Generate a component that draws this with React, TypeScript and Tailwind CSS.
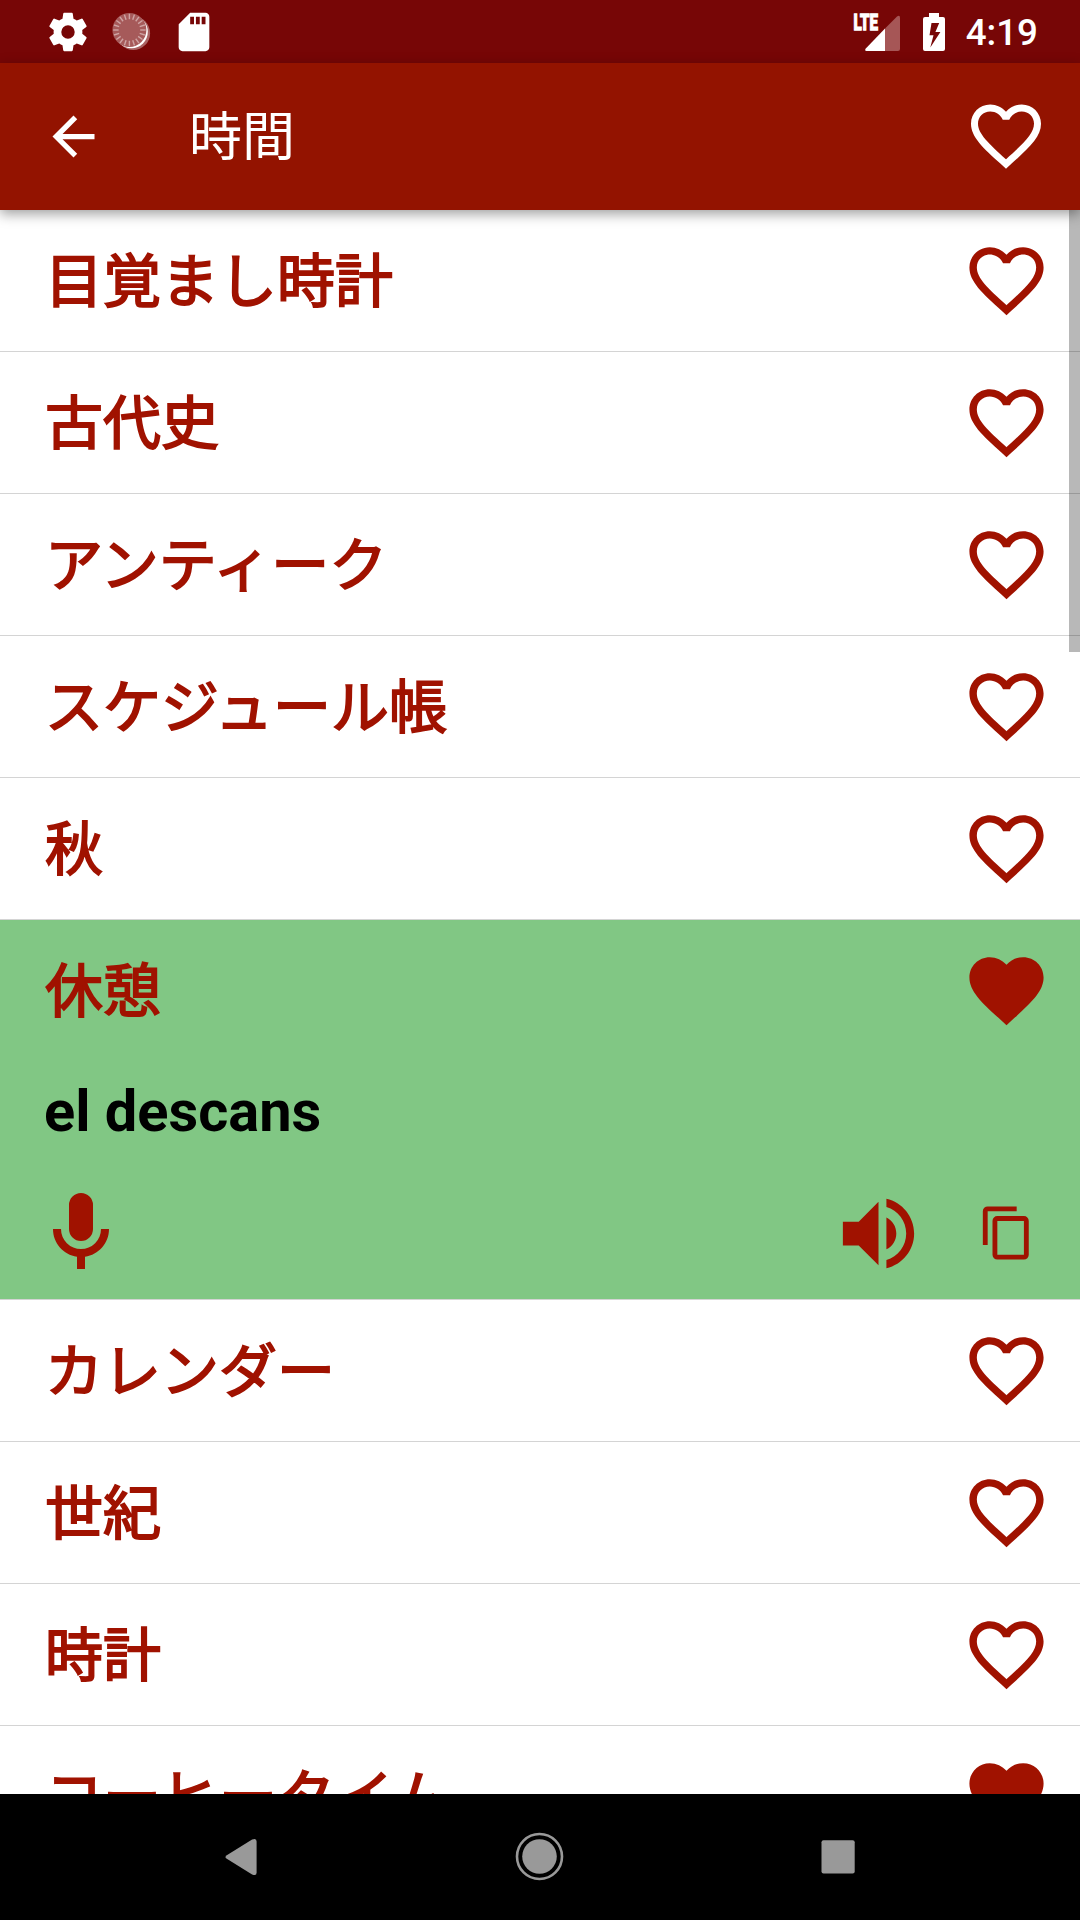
import { useState } from 'react';

// ─── Types ───────────────────────────────────────────────────────────────────

interface Word {
  term: string;
  translation?: string;
  favorite?: boolean;
}

// ─── Data ────────────────────────────────────────────────────────────────────

const WORDS: Word[] = [
  { term: '目覚まし時計' },
  { term: '古代史' },
  { term: 'アンティーク' },
  { term: 'スケジュール帳' },
  { term: '秋' },
  { term: '休憩', translation: 'el descans', favorite: true },
  { term: 'カレンダー' },
  { term: '世紀' },
  { term: '時計' },
  { term: 'コーヒータイム', favorite: true },
];

const ICONS = {
  back: 'M20 11H7.83l5.59-5.59L12 4l-8 8 8 8 1.41-1.41L7.83 13H20v-2z',
  heart:
    'M12,21.35L10.55,20.03C5.4,15.36 2,12.27 2,8.5C2,5.41 4.42,3 7.5,3C9.24,3 10.91,3.81 12,5.08C13.09,3.81 14.76,3 16.5,3C19.58,3 22,5.41 22,8.5C22,12.27 18.6,15.36 13.45,20.03L12,21.35Z',
  heartOutline:
    'M12.1,18.55L12,18.65L11.89,18.55C7.14,14.24 4,11.39 4,8.5C4,6.5 5.5,5 7.5,5C9.04,5 10.54,6 11.07,7.36H12.93C13.46,6 14.96,5 16.5,5C18.5,5 20,6.5 20,8.5C20,11.39 16.86,14.24 12.1,18.55M16.5,3C14.76,3 13.09,3.81 12,5.08C10.91,3.81 9.24,3 7.5,3C4.42,3 2,5.41 2,8.5C2,12.27 5.4,15.36 10.55,20.03L12,21.35L13.45,20.03C18.6,15.36 22,12.27 22,8.5C22,5.41 19.58,3 16.5,3Z',
  mic: 'M12,2A3,3 0 0,1 15,5V11A3,3 0 0,1 12,14A3,3 0 0,1 9,11V5A3,3 0 0,1 12,2M19,11C19,14.53 16.39,17.44 13,17.93V21H11V17.93C7.61,17.44 5,14.53 5,11H7A5,5 0 0,0 12,16A5,5 0 0,0 17,11H19Z',
  volume:
    'M14,3.23V5.29C16.89,6.15 19,8.83 19,12C19,15.17 16.89,17.84 14,18.7V20.77C18,19.86 21,16.28 21,12C21,7.72 18,4.14 14,3.23M16.5,12C16.5,10.23 15.5,8.71 14,7.97V16C15.5,15.29 16.5,13.76 16.5,12M3,9V15H7L12,20V4L7,9H3Z',
  copy: 'M19,21H8V7H19M19,5H8A2,2 0 0,0 6,7V21A2,2 0 0,0 8,23H19A2,2 0 0,0 21,21V7A2,2 0 0,0 19,5M16,1H4A2,2 0 0,0 2,3V17H4V3H16V1Z',
  cog: 'M12,15.5A3.5,3.5 0 0,1 8.5,12A3.5,3.5 0 0,1 12,8.5A3.5,3.5 0 0,1 15.5,12A3.5,3.5 0 0,1 12,15.5M19.43,12.97C19.47,12.65 19.5,12.33 19.5,12C19.5,11.67 19.47,11.34 19.43,11L21.54,9.37C21.73,9.22 21.78,8.95 21.66,8.73L19.66,5.27C19.54,5.05 19.27,4.96 19.05,5.05L16.56,6.05C16.04,5.66 15.5,5.32 14.87,5.07L14.5,2.42C14.46,2.18 14.25,2 14,2H10C9.75,2 9.54,2.18 9.5,2.42L9.13,5.07C8.5,5.32 7.96,5.66 7.44,6.05L4.95,5.05C4.73,4.96 4.46,5.05 4.34,5.27L2.34,8.73C2.21,8.95 2.27,9.22 2.46,9.37L4.57,11C4.53,11.34 4.5,11.67 4.5,12C4.5,12.33 4.53,12.65 4.57,12.97L2.46,14.63C2.27,14.78 2.21,15.05 2.34,15.27L4.34,18.73C4.46,18.95 4.73,19.03 4.95,18.95L7.44,17.94C7.96,18.34 8.5,18.68 9.13,18.93L9.5,21.58C9.54,21.82 9.75,22 10,22H14C14.25,22 14.46,21.82 14.5,21.58L14.87,18.93C15.5,18.67 16.04,18.34 16.56,17.94L19.05,18.95C19.27,19.03 19.54,18.95 19.66,18.73L21.66,15.27C21.78,15.05 21.73,14.78 21.54,14.63L19.43,12.97Z',
  sdCard:
    'M18 2h-8L4.02 8 4 20c0 1.1.9 2 2 2h12c1.1 0 2-.9 2-2V4c0-1.1-.9-2-2-2zm-6 6h-2V4h2v4zm3 0h-2V4h2v4zm3 0h-2V4h2v4z',
};

function Icon({ name, className }: { name: keyof typeof ICONS; className: string }) {
  return (
    <svg viewBox="0 0 24 24" fill="currentColor" className={`shrink-0 ${className}`}>
      <path d={ICONS[name]} />
    </svg>
  );
}

// ─── Status bar ──────────────────────────────────────────────────────────────

function SyncDial() {
  const ticks = Array.from({ length: 20 }, (_, i) => i * 18);
  return (
    <svg viewBox="0 0 40 40" className="ml-[20px] h-[40px] w-[40px]">
      <circle cx="22.3" cy="21.2" r="16.8" fill="#fff" fillOpacity="0.38" />
      <circle cx="20.4" cy="19.8" r="16.4" fill="#fff" />
      <circle cx="18.4" cy="18" r="17" fill="#a65a5a" />
      {ticks.map(a => (
        <line
          key={a}
          x1="18.4" y1="1.8" x2="18.4" y2="7.2"
          stroke="#cfa4a4" strokeWidth="1.4"
          transform={`rotate(${a} 18.4 18)`}
        />
      ))}
    </svg>
  );
}

function StatusBar() {
  return (
    <div className="flex h-[63px] shrink-0 items-center bg-[#770606] pl-[45px] pr-[42px] text-white">
      <Icon name="cog" className="h-[46px] w-[46px]" />
      <SyncDial />
      <Icon name="sdCard" className="ml-[20px] h-[46px] w-[46px]" />

      <div className="ml-auto flex items-center">
        <svg viewBox="0 0 50 40" className="h-[40px] w-[50px] overflow-visible">
          <path d="M45 4.5Q48 2.5 48 6V37Q48 39 46 39H33V16.5Z" fill="#a65656" />
          <path d="M33 16.5V39H14.5Q12.2 39 13.8 36.6Z" fill="#fff" />
          <text
            x="1.5" y="18.3" textLength="24.5" lengthAdjust="spacingAndGlyphs"
            fill="#fff" stroke="#fff" strokeWidth="1.3" fontSize="21.5" fontWeight="800"
          >
            LTE
          </text>
        </svg>
        <svg viewBox="0 0 24 40" className="ml-[20px] h-[40px] w-[24px]">
          <path
            fill="#fff"
            fillRule="evenodd"
            d="M7 1H17V5H21Q23 5 23 7V37Q23 39 21 39H3Q1 39 1 37V7Q1 5 3 5H7ZM9.5 11L7.5 23.2H11.5L8.3 35.5L18.4 20H13.4L17.2 11Z"
          />
        </svg>
        <span className="ml-[20px] pt-[2px] text-[36.75px] leading-[43px] font-medium">4:19</span>
      </div>
    </div>
  );
}

// ─── App bar ─────────────────────────────────────────────────────────────────

function AppBar({ title }: { title: string }) {
  return (
    <header className="z-10 flex h-[147px] shrink-0 items-center bg-[#931300] pl-[42px] pr-[32px] text-white shadow-[0_4px_12px_rgba(0,0,0,0.38)]">
      <Icon name="back" className="h-[63px] w-[63px]" />
      <h1 className="ml-[84px] pt-[3px] text-[53px] leading-[62px]">{title}</h1>
      <Icon name="heartOutline" className="mb-[2px] ml-auto h-[84px] w-[84px]" />
    </header>
  );
}

// ─── Word row ────────────────────────────────────────────────────────────────

function WordRow({ word }: { word: Word }) {
  const [favorite, setFavorite] = useState(Boolean(word.favorite));

  return (
    <li className={`shrink-0 border-b border-[#d4d4d4] ${word.translation ? 'bg-[#81c784]' : 'bg-white'}`}>
      <div className="flex h-[141px] items-center justify-between pl-[45px] pr-[29px]">
        <span className="pt-[3px] text-[58px] leading-[68px] [-webkit-text-stroke:1.8px]">{word.term}</span>
        <button onClick={() => setFavorite(prev => !prev)}>
          <Icon name={favorite ? 'heart' : 'heartOutline'} className="h-[89px] w-[89px]" />
        </button>
      </div>

      {word.translation && (
        <>
          <p className="flex h-[106px] items-center pb-[6px] pl-[44px] text-[57.75px] leading-[68px] font-bold text-black">
            {word.translation}
          </p>
          <div className="flex h-[132px] items-center pl-[33px] pr-[44px]">
            <Icon name="mic" className="h-[96px] w-[96px]" />
            <Icon name="volume" className="ml-auto h-[95px] w-[95px]" />
            <Icon name="copy" className="ml-[52px] h-[58px] w-[58px]" />
          </div>
        </>
      )}
    </li>
  );
}

// ─── Navigation bar ──────────────────────────────────────────────────────────

function NavBar() {
  return (
    <nav className="flex h-[126px] shrink-0 items-center justify-between bg-black px-[209px]">
      <svg viewBox="0 0 64 64" className="h-[64px] w-[64px]">
        <path d="M17.8 30.2L43.1 14.6Q47.6 12.5 47.6 16.5V47.5Q47.6 51.5 43.1 49.4L17.8 33.8Q15.1 32 17.8 30.2Z" fill="#999" />
      </svg>
      <svg viewBox="0 0 64 64" className="h-[64px] w-[64px]">
        <circle cx="31.5" cy="31.5" r="22.5" fill="none" stroke="#999" strokeWidth="2.6" />
        <circle cx="31.5" cy="31.5" r="17.3" fill="#999" />
      </svg>
      <svg viewBox="0 0 64 64" className="h-[64px] w-[64px]">
        <rect x="14.5" y="15.2" width="33.2" height="33.4" rx="2" fill="#999" />
      </svg>
    </nav>
  );
}

// ─── Page ────────────────────────────────────────────────────────────────────

export default function App() {
  return (
    <div className="flex h-[1920px] w-[1080px] flex-col overflow-hidden bg-white font-['Roboto','Noto_Sans_CJK_JP',sans-serif]">
      <StatusBar />
      <AppBar title="時間" />
      <main className="relative flex-1 overflow-hidden">
        <ul className="flex flex-col text-[#a01200]">
          {WORDS.map(word => (
            <WordRow key={word.term} word={word} />
          ))}
        </ul>
        {/* Scroll thumb */}
        <div className="absolute top-0 right-0 h-[442px] w-[11px] bg-black/28" />
      </main>
      <NavBar />
    </div>
  );
}
